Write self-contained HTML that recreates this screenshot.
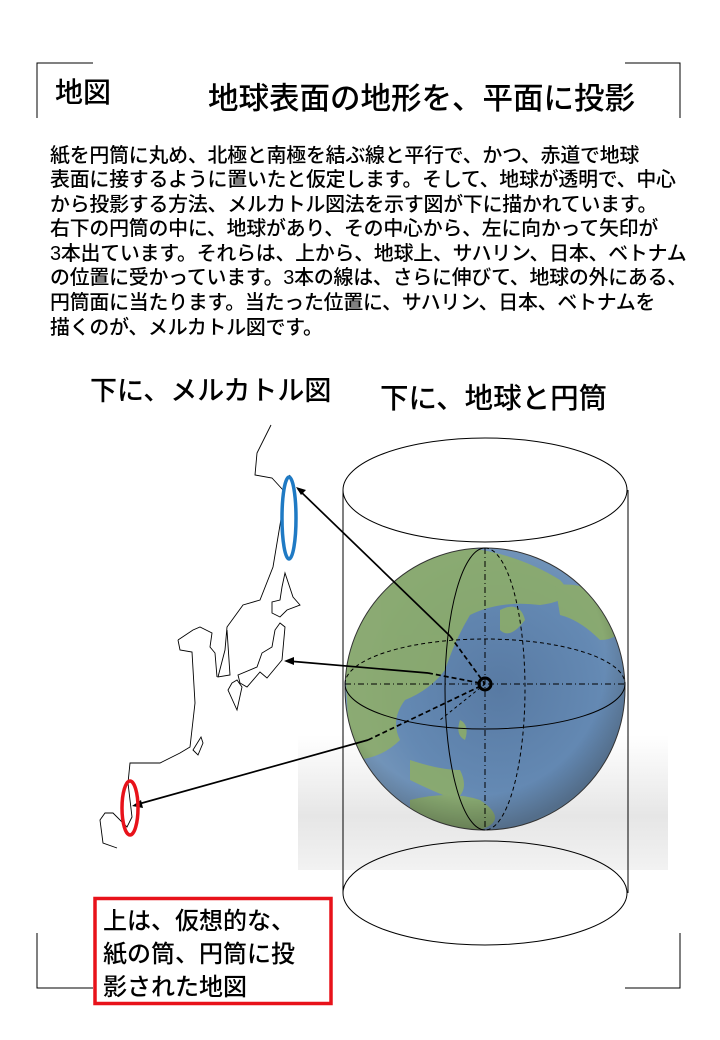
<!DOCTYPE html>
<html><head><meta charset="utf-8"><style>
body{margin:0;width:720px;height:1040px;background:#fff;position:relative;overflow:hidden;font-family:"Liberation Sans","Noto Sans CJK JP",sans-serif;color:#000}
.t{position:absolute;white-space:nowrap;line-height:1;font-weight:500}
.p{position:absolute;left:50px;font-size:19.9px;white-space:nowrap;line-height:1;font-weight:500;letter-spacing:-0.2px}
svg{position:absolute;left:0;top:0}
</style></head><body>
<svg width="720" height="1040" viewBox="0 0 720 1040">
<defs>
<radialGradient id="g" cx="0.55" cy="0.5" r="0.6">
<stop offset="0" stop-color="#587aa3"/><stop offset="0.6" stop-color="#6489b3"/><stop offset="1" stop-color="#7c9cbd"/>
</radialGradient>
<radialGradient id="dk" cx="0.45" cy="0.4" r="0.6">
<stop offset="0.8" stop-color="#000" stop-opacity="0"/><stop offset="1" stop-color="#000" stop-opacity="0.25"/>
</radialGradient>
<linearGradient id="sh" x1="0" y1="0" x2="0" y2="1"><stop offset="0" stop-color="#fff"/><stop offset="0.6" stop-color="#e6e6e6"/><stop offset="1" stop-color="#f2f2f2"/></linearGradient>
<clipPath id="cg"><ellipse cx="485" cy="689" rx="140" ry="141"/></clipPath>
</defs>
<g stroke="#000" stroke-width="1" fill="none">
<path d="M37 118V63H93M625 63H680V118M37 933V988H93M625 988H680V933"/>
</g>
<rect x="298" y="735" width="370" height="135" fill="url(#sh)"/>
<ellipse cx="485" cy="689" rx="140" ry="141" fill="url(#g)"/>
<g clip-path="url(#cg)" fill="#8fae66" opacity="0.85">
<path d="M340 560 Q400 540 470 548 Q520 555 560 580 Q580 600 540 605 Q500 600 470 615 Q455 640 445 670 Q430 690 405 700 Q390 720 400 740 Q380 760 350 760 Z"/>
<path d="M555 585 Q600 580 630 620 Q620 640 600 640 Q580 620 560 615 Z"/>
<path d="M500 610 Q520 600 525 620 Q510 640 500 630 Z"/>
<path d="M410 760 Q440 770 460 770 Q470 790 455 800 Q430 790 410 780 Z"/>
<path d="M410 800 Q450 790 480 800 Q510 820 480 830 Q440 830 410 820 Z"/>
<path d="M460 720 Q470 725 465 740 Q455 735 460 720 Z"/>
</g>
<ellipse cx="485" cy="689" rx="140" ry="141" fill="url(#dk)"/>
<ellipse cx="485" cy="689" rx="140" ry="141" fill="none" stroke="#333" stroke-width="1"/>
<g stroke="#000" fill="none" stroke-width="1">
<ellipse cx="485" cy="490" rx="142" ry="52"/>
<ellipse cx="485" cy="893" rx="142" ry="52"/>
<path d="M343 490V893M628 490V893"/>
<path d="M345 684 A140 45 0 0 0 625 684"/>
<path d="M345 684 A140 45 0 0 1 625 684" stroke-dasharray="4 3"/>
<path d="M485 548 A40 141 0 0 0 485 830"/>
<path d="M485 548 A40 141 0 0 1 485 830" stroke-dasharray="4 3"/>
<path d="M345 684H625M485 548V830" stroke-dasharray="6 3 1 3"/>
<path d="M485 684 L440 720" stroke-dasharray="3 3"/>
</g>
<g stroke="#000" stroke-width="1.7" fill="none">
<path d="M298 489 L450 636"/>
<path d="M450 636 L485 684" stroke-dasharray="5 3"/>
<path d="M288 661 L428 673"/>
<path d="M428 673 L485 684" stroke-dasharray="5 3"/>
<path d="M135 805 L368 740"/>
<path d="M368 740 L485 684" stroke-dasharray="5 3"/>
</g>
<g fill="#000">
<path d="M296 487 l10 3 -5 5z"/>
<path d="M284 661 l10 -4 0 8z"/>
<path d="M132 806 l9 -6 2 8z"/>
</g>
<circle cx="485" cy="684" r="6" fill="none" stroke="#000" stroke-width="3"/>
<g stroke="#000" stroke-width="0.9" fill="none">
<path d="M271 425 L257 453 L255 475 L272 478 L283 490 L290 475 M283 507 L273 567 L260 600 L243 605 L227 627 L225 650 L218 677 L230 675 L227 630"/>
<path d="M285 573 L293 597 L300 605 L287 610 L280 617 L272 613 L272 602 L280 600 L282 587 Z"/>
<path d="M280 623 L285 627 L282 660 L267 678 L260 672 L247 687 L240 683 L238 675 L257 667 L262 653 L272 647 L275 630 Z"/>
<path d="M232 683 L237 680 L242 687 L237 710 L228 690 Z"/>
<path d="M178 640 L180 650 L192 652 L195 703 L190 747 L180 753 L160 763 L130 763 L128 783 L132 817 L127 827 L113 813 L105 813 L100 820 L103 843 L117 848"/>
<path d="M178 640 L193 630 L200 627 L212 633 L210 647 L215 653 L217 677"/>
<path d="M193 750 L201 737 L203 743 L198 755 Z"/>
</g>
<ellipse cx="289" cy="518" rx="7" ry="41" fill="none" stroke="#1f7ac4" stroke-width="3.5"/>
<ellipse cx="130" cy="808" rx="8" ry="27" fill="none" stroke="#e8121a" stroke-width="3.5"/>
<rect x="95" y="898.5" width="236" height="105" fill="none" stroke="#e8121a" stroke-width="3.5"/>
</svg>
<div class="t" style="left:55px;top:79px;font-size:28px">地図</div>
<div class="t" style="left:208px;top:84px;font-size:30.5px">地球表面の地形を、平面に投影</div>
<div class="p" style="top:147px">紙を円筒に丸め、北極と南極を結ぶ線と平行で、かつ、赤道で地球</div>
<div class="p" style="top:171px">表面に接するように置いたと仮定します。そして、地球が透明で、中心</div>
<div class="p" style="top:196px">から投影する方法、メルカトル図法を示す図が下に描かれています。</div>
<div class="p" style="top:220px">右下の円筒の中に、地球があり、その中心から、左に向かって矢印が</div>
<div class="p" style="top:245px">3本出ています。それらは、上から、地球上、サハリン、日本、ベトナム</div>
<div class="p" style="top:269px">の位置に受かっています。3本の線は、さらに伸びて、地球の外にある、</div>
<div class="p" style="top:294px">円筒面に当たります。当たった位置に、サハリン、日本、ベトナムを</div>
<div class="p" style="top:319px">描くのが、メルカトル図です。</div>
<div class="t" style="left:90px;top:378px;font-size:27px">下に、メルカトル図</div>
<div class="t" style="left:380px;top:385px;font-size:28.5px">下に、地球と円筒</div>
<div class="t" style="left:103px;top:905px;font-size:24px;line-height:33px">上は、仮想的な、<br>紙の筒、円筒に投<br>影された地図</div>
</body></html>
